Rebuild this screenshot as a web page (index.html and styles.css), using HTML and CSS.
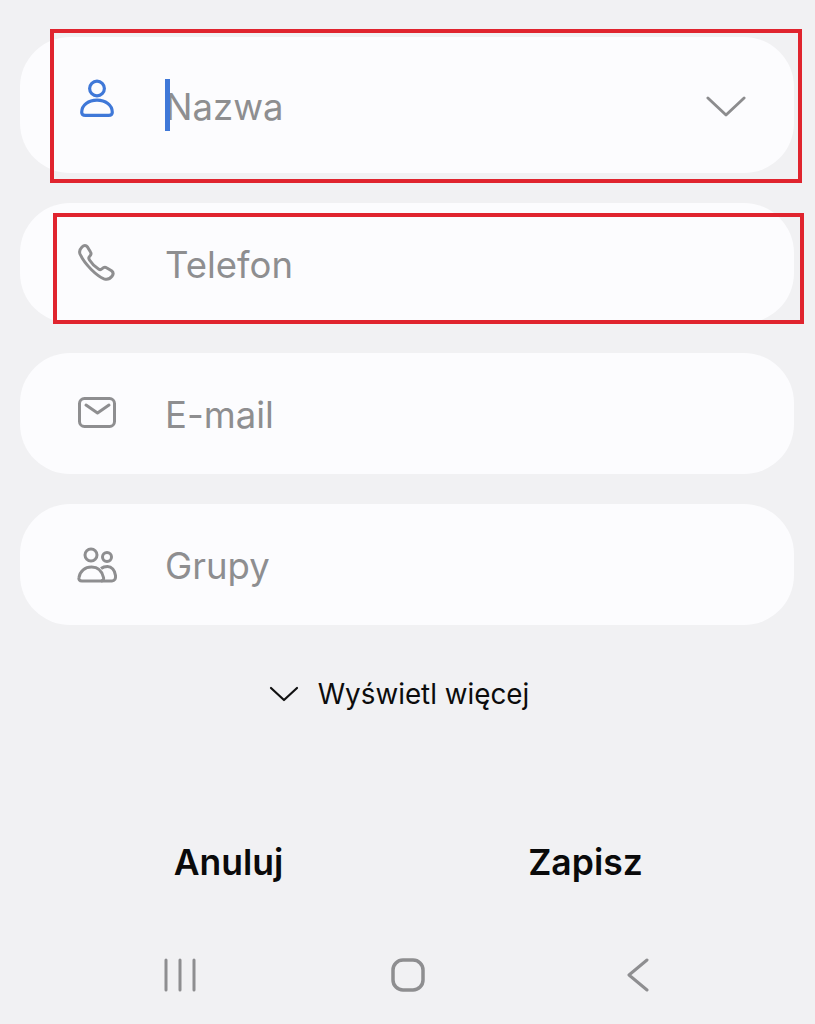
FILE: index.html
```html
<!DOCTYPE html>
<html lang="pl">
<head>
    <meta charset="UTF-8">
    <meta name="viewport" content="width=device-width, initial-scale=1.0">
    <title>Nowy kontakt</title>
    <link rel="stylesheet" href="styles.css">
</head>
<body>
    <main class="form">
        <div class="field field-name">
            <svg class="icon" viewBox="4 0 32 36" fill="none" stroke="#3f78d8" stroke-width="3">
                <circle cx="20" cy="9" r="7"/>
                <path d="M9 34.500h22c2 0 3.500-1 3.500-3 0-7-6.500-11.500-14.500-11.500S5.500 24.500 5.500 31.500c0 2 1.500 3 3.500 3z"/>
            </svg>
            <span class="cursor"></span>
            <span class="label">Nazwa</span>
            <svg class="expand" viewBox="0 0 42 24" fill="none" stroke="#8c8c8e" stroke-width="3" stroke-linecap="round" stroke-linejoin="round">
                <path d="M2 3l19 18L40 3"/>
            </svg>
        </div>
        <div class="field field-phone">
            <svg class="icon" viewBox="0 0 40 40" fill="none" stroke="#8e8e90" stroke-width="3" stroke-linejoin="round">
                <path d="M5 4c2-2 4-2 5.500 0l3 5c1 1.500.5 3-1 4.500-1 1-1 2 0 3.500 2.500 4 5 6.500 9 9 1.500 1 2.500.8 3.500-.2 1.500-1.500 3-2 4.500-1l5 3c2 1.500 2 3.500.5 5.500-2 2.500-5 3.500-8 2.500C20 33 8 22 3 11 2 8.500 3 6 5 4z"/>
            </svg>
            <span class="label">Telefon</span>
        </div>
        <div class="field">
            <svg class="icon" viewBox="0 0 40 40" fill="none" stroke="#8e8e90" stroke-width="3" stroke-linecap="round" stroke-linejoin="round">
                <rect x="2.500" y="4.500" width="35" height="28" rx="5"/>
                <path d="M9 11l11.500 8L32 11"/>
            </svg>
            <span class="label">E-mail</span>
        </div>
        <div class="field">
            <svg class="icon" viewBox="0 0 40 40" fill="none" stroke="#8e8e90" stroke-width="3" stroke-linejoin="round">
                <circle cx="14" cy="10" r="6"/>
                <circle cx="30" cy="12" r="4.500"/>
                <path d="M5 36c-2.500 0-3.500-1.500-3-3.500C3 26 8 22 14.500 22S25 26 26.500 32.500c.5 2-.5 3.500-3 3.500z"/>
                <path d="M24 23.500c2-1.500 4-2 6.500-2 4 0 7.500 3.500 8 9 .3 3.500-1 5.500-3.500 5.500H24"/>
            </svg>
            <span class="label">Grupy</span>
        </div>
    </main>

    <div class="more">
        <svg class="more-arrow" viewBox="0 0 30 18" fill="none" stroke="#111" stroke-width="2.200" stroke-linecap="round" stroke-linejoin="round">
            <path d="M2 3l13 12L28 3"/>
        </svg>
        <span>Wyświetl więcej</span>
    </div>

    <div class="actions">
        <button class="action">Anuluj</button>
        <button class="action">Zapisz</button>
    </div>

    <nav class="navbar">
        <svg class="nav-recent" viewBox="0 0 34 34" fill="none" stroke="#8e8e90" stroke-width="3" stroke-linecap="round">
            <path d="M3 2v30M17 2v30M31 2v30"/>
        </svg>
        <svg class="nav-home" viewBox="0 0 34 34" fill="none" stroke="#8e8e90" stroke-width="3.500">
            <rect x="2" y="2" width="30" height="30" rx="10"/>
        </svg>
        <svg class="nav-back" viewBox="0 0 22 34" fill="none" stroke="#8e8e90" stroke-width="3" stroke-linecap="round" stroke-linejoin="round">
            <path d="M20 2L2 17l18 15"/>
        </svg>
    </nav>

    <div class="mark mark-name"></div>
    <div class="mark mark-phone"></div>
</body>
</html>
```

FILE: styles.css
```css
* {
    box-sizing: border-box;
}

html, body {
    margin: 0;
    padding: 0;
}

body {
    position: relative;
    width: 815px;
    height: 1024px;
    overflow: hidden;
    background-color: #f1f1f3;
    font-family: Inter, "Noto Sans", sans-serif;
}

.form {
    display: flex;
    flex-direction: column;
    gap: 30px;
    padding: 37px 21px 0 20px;
}

.field {
    display: flex;
    align-items: center;
    height: 121px;
    padding-left: 57px;
    background-color: #fcfcfe;
    border-radius: 50px;
}

.field-name {
    position: relative;
    height: 136px;
    align-items: flex-start;
    padding-top: 42px;
}

.field-phone {
    height: 120px;
}

.icon {
    flex: none;
    width: 40px;
    height: 40px;
    margin-right: 48px;
}

.field-name .icon {
    width: 34px;
    height: 38px;
    margin-left: 3px;
    margin-right: 51px;
}

.label {
    padding-top: 2px;
    font-size: 36.5px;
    line-height: 50px;
    color: #8e8e90;
}

.field-name .label {
    padding-top: 0;
    line-height: 56px;
}

.field-phone .label {
    padding-top: 4px;
}

.cursor {
    position: absolute;
    left: 145px;
    top: 42px;
    width: 4.500px;
    height: 52px;
    background-color: #3f78d8;
}

.expand {
    width: 40px;
    height: 23px;
    margin-left: auto;
    margin-right: 48px;
    margin-top: 16px;
}

.more {
    display: flex;
    justify-content: center;
    align-items: center;
    gap: 19px;
    margin-top: 49px;
    padding-right: 17px;
    font-size: 27.800px;
    line-height: 40px;
    color: #0c0c0c;
}

.more-arrow {
    width: 30px;
    height: 18px;
}

.actions {
    display: flex;
    margin-top: 124px;
    padding: 0 51px 0 50px;
}

.action {
    flex: 1;
    padding: 0;
    border: none;
    background: none;
    font-family: inherit;
    font-size: 35.500px;
    font-weight: 600;
    line-height: 50px;
    color: #0a0a0a;
}

.navbar {
    display: flex;
    align-items: center;
    margin-top: 70px;
    padding-left: 163px;
}

.nav-recent, .nav-home {
    width: 34px;
    height: 34px;
}

.nav-home {
    margin: 0 202px 0 194px;
}

.nav-back {
    width: 22px;
    height: 34px;
}

.mark {
    position: absolute;
    border: 4px solid #e0242e;
}

.mark-name {
    left: 50px;
    top: 29px;
    width: 752px;
    height: 154px;
}

.mark-phone {
    left: 53px;
    top: 213px;
    width: 751px;
    height: 111px;
}
```
